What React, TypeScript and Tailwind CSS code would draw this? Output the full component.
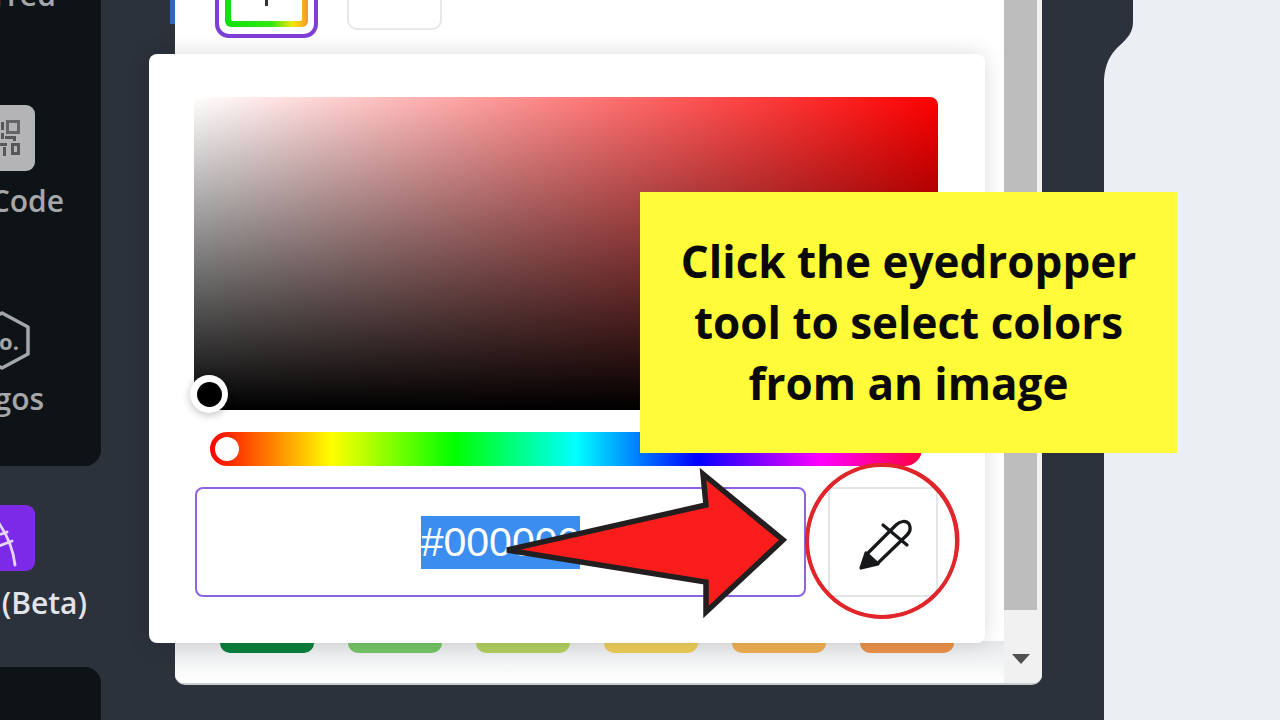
const sans = "font-['Open_Sans',sans-serif]";

function RailLabel({ children, className = "" }: { children: React.ReactNode; className?: string }) {
  return (
    <div className={`h-[34px] whitespace-nowrap text-[30px] font-semibold leading-[34px] ${sans} ${className}`}>
      {children}
    </div>
  );
}

function QrTile() {
  return (
    <div className="flex h-[66px] w-[66px] items-center justify-center rounded-[9px] bg-[#b4b4b6]">
      <svg width="38" height="38" viewBox="0 0 38 38" fill="#56575b">
        <path d="M1 1h14v14H1zM4 4v8h8V4z" fillRule="evenodd" />
        <path d="M23 1h14v14H23zM26 4v8h8V4z" fillRule="evenodd" opacity="0.85" />
        <path d="M1 23h14v14H1zM4 26v8h8v-8z" fillRule="evenodd" />
        <path d="M28 24h9v12h-9zM31 27v6h3v-6z" fillRule="evenodd" />
        <path d="M18 3h3v8h-3zM18 14h3v6h-3zM6 18h10v3H6zM22 17h8v3h-8zM17 24h7v3h-7zM20 28h3v9h-3zM30 17h3v5h-3z" />
      </svg>
    </div>
  );
}

function LogoHex() {
  return (
    <div className="relative flex h-[66px] w-[66px] items-center justify-center">
      <svg width="62" height="62" viewBox="0 0 62 62" fill="none" className="absolute left-[2px] top-[1px]">
        <path d="M31 4 57 18v27L31 59 5 45V18z" stroke="#a4a6a9" strokeWidth="3.5" strokeLinejoin="round" />
      </svg>
      <span className={`relative text-[22px] font-bold text-[#a4a6a9] ${sans}`}>Co.</span>
    </div>
  );
}

function DrawTile() {
  return (
    <div className="flex h-[66px] w-[66px] items-center justify-center rounded-[9px] bg-[#7d2ae8]">
      <svg width="66" height="66" viewBox="0 0 66 66" fill="none" stroke="#e4d6fb" strokeWidth="2.8" strokeLinecap="round">
        <path d="M27 14C36 26 44 42 46 60" />
        <path d="M27 14C20 28 16 42 16 58" />
        <path d="M24 30C30 30 36 28 38 27" />
        <path d="M22 42C30 42 38 38 43 36" />
      </svg>
    </div>
  );
}

function Rail() {
  return (
    <div className="w-[101px] shrink-0 overflow-hidden">
      <div className="flex h-[466px] w-[101px] flex-col rounded-br-[16px] bg-[#0e1318]">
        <div className="ml-[-99px] flex w-[202px] flex-col items-center text-[#a5a7aa]">
          <RailLabel className="mt-[-22px]">Starred</RailLabel>
          <div className="mt-[93px]"><QrTile /></div>
          <RailLabel className="mt-[13px]">QR Code</RailLabel>
          <div className="mt-[90px]"><LogoHex /></div>
          <RailLabel className="mt-[8px]">Logos</RailLabel>
        </div>
      </div>
      <div className="h-[201px]">
        <div className="ml-[-99px] flex w-[202px] flex-col items-center pt-[39px] text-[#e2e4e7]">
          <DrawTile />
          <RailLabel className="mt-[15px]">Draw (Beta)</RailLabel>
        </div>
      </div>
      <div className="h-[53px] rounded-tr-[16px] bg-[#0e1318]" />
    </div>
  );
}

function Panel() {
  const bottomSwatches = ["bg-[#0b7f3d]", "bg-[#75c465]", "bg-[#b2cf5f]", "bg-[#eccb57]", "bg-[#eeae52]", "bg-[#ea9149]"];
  return (
    <div className="relative ml-[74px] flex h-[685px] w-[867px] shrink-0 overflow-hidden rounded-b-[10px] border-b-2 border-[#c9ccd1] bg-white">
      <div className="flex flex-1 flex-col">
        <div className="flex items-start gap-[29px] pl-[40px]">
          <div className="flex h-[38px] w-[103px] rounded-b-[14px] border-[4px] border-t-0 border-[#7d3fd6] px-[6px] pb-[7px]">
            <div className="relative flex-1 rounded-b-[6px] bg-[linear-gradient(90deg,#10e010_0%,#30e810_55%,#f5e60a_82%,#f9962a_100%)] px-[6px] pb-[6px]">
              <div className="flex h-full justify-center rounded-b-[2px] bg-white">
                <div className="h-[6px] w-[3px] bg-[#333]" />
              </div>
            </div>
          </div>
          <div className="h-[30px] w-[95px] rounded-b-[10px] border-2 border-t-0 border-[#e6e8eb]" />
        </div>
        <div className="mt-auto flex h-[42px] gap-[34px] bg-gradient-to-b from-[#e6e8ea] to-white pl-[45px]">
          {bottomSwatches.map((color) => (
            <div key={color} className={`h-[12px] w-[94px] rounded-b-[10px] ${color}`} />
          ))}
        </div>
      </div>
      <div className="flex w-[38px] shrink-0 flex-col bg-[#f1f1f1] pr-[5px]">
        <div className="h-[610px] bg-[#bdbdbd]" />
        <div className="mt-[44px] flex justify-center">
          <div className="h-0 w-0 border-x-[9px] border-t-[10px] border-x-transparent border-t-[#505050]" />
        </div>
      </div>
    </div>
  );
}

function Eyedropper() {
  return (
    <svg width="60" height="60" viewBox="0 0 60 60" fill="none" stroke="#17181a" strokeWidth="3.2" strokeLinecap="round" strokeLinejoin="round">
      <path d="M14 42 43 13C47 9 53 8 56 12 58 16 57 20 54 23L25 51" />
      <path d="M30 13 54 33" />
      <path d="M8 56 13 41 25 52Z" fill="#17181a" />
    </svg>
  );
}

function ColorPicker() {
  return (
    <div className="absolute left-[149px] top-[54px] h-[589px] w-[836px] rounded-[8px] bg-white pl-[45px] pr-[47px] pt-[43px] shadow-[0_0_22px_rgba(0,0,0,0.14)]">
      <div className="relative h-[313px] rounded-[8px] bg-[linear-gradient(to_top,#000,transparent),linear-gradient(to_right,#fff,#f00)]">
        <div className="absolute left-[-4px] top-[278px] flex h-[38px] w-[38px] items-center justify-center rounded-full bg-white shadow-[0_2px_8px_rgba(0,0,0,0.25)]">
          <div className="h-[25px] w-[25px] rounded-full bg-black" />
        </div>
      </div>
      <div className="relative ml-[16px] mr-[16px] mt-[22px] h-[34px] rounded-full bg-[linear-gradient(to_right,#f00_0%,#ff0_17.1%,#0f0_34.3%,#0ff_51.4%,#00f_68.5%,#f0f_85.7%,#ff0040_100%)]">
        <div className="absolute left-[5px] top-[5px] h-[24px] w-[24px] rounded-full bg-white" />
      </div>
      <div className="ml-[1px] mt-[21px] flex h-[110px] gap-[22px]">
        <div className="flex w-[611px] items-center justify-center rounded-[8px] border-2 border-[#8f62e0]">
          <span className="bg-[#3b8ef0] font-['Liberation_Sans',sans-serif] text-[41px] leading-[53px] text-white">#000000</span>
        </div>
        <div className="flex w-[110px] items-center justify-center rounded-[4px] border-2 border-[#e3e5e8]">
          <Eyedropper />
        </div>
      </div>
    </div>
  );
}

export default function App() {
  return (
    <div className="relative flex h-[720px] w-[1280px] overflow-hidden bg-[#2b323c]">
      <Rail />
      {/* blue edge of the selected tab, peeks out beside the panel */}
      <div className="absolute left-[170px] top-0 h-[24px] w-[5px] bg-[#2d6cb5]" />
      <Panel />
      <div className="relative ml-[62px] flex-1 bg-[#ebeef2]">
        <svg width="40" height="90" viewBox="0 0 40 90" className="absolute left-0 top-0" fill="#2b323c">
          <path d="M0 0H29V22C29 32 24 38 14 47 6 55 1 64 0 80Z" />
        </svg>
      </div>
      <ColorPicker />
      <div className={`absolute left-[640px] top-[192px] flex h-[261px] w-[537px] items-center justify-center bg-[#fffb38] text-center text-[44px] font-bold leading-[61px] text-[#0a0a0a] ${sans}`}>
        <div>
          Click the eyedropper
          <br />
          tool to select colors
          <br />
          from an image
        </div>
      </div>
      <svg width="300" height="170" viewBox="0 0 300 170" className="absolute left-[500px] top-[460px]">
        <path d="M7 90 206 45 203 14 283 80 206 152 206 122Z" fill="#fb1c1c" stroke="#231f20" strokeWidth="5.5" strokeLinejoin="miter" />
      </svg>
      <svg width="170" height="170" viewBox="0 0 170 170" className="absolute left-[797px] top-[456px]" fill="none" stroke="#e0262a">
        <ellipse cx="85" cy="85" rx="75" ry="76" strokeWidth="4" />
        <ellipse cx="85.5" cy="84.5" rx="75" ry="76" strokeWidth="3" transform="rotate(20 85 85)" />
      </svg>
    </div>
  );
}
